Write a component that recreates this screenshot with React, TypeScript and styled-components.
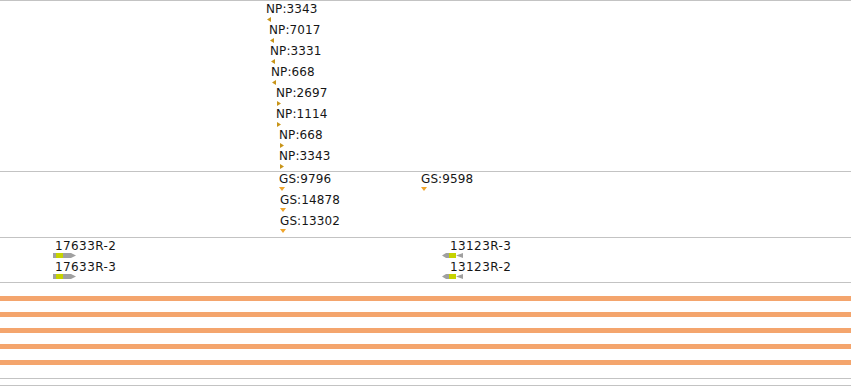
import React from 'react';
import styled, { createGlobalStyle } from 'styled-components';

const GlobalStyle = createGlobalStyle`
  html, body { margin: 0; padding: 0; background: #ffffff; }
  body {
    font-family: "DejaVu Sans", "Liberation Sans", sans-serif;
    font-size: 12px;
    color: #161616;
  }
`;

const Browser = styled.div`
  width: 851px;
  height: 386px;
  display: flex;
  flex-direction: column;
  overflow: hidden;
`;

const Track = styled.div<{ $height: number }>`
  position: relative;
  box-sizing: border-box;
  flex: none;
  height: ${p => p.$height}px;
  border-top: 1px solid #c3c3c3;
`;

const PileupTrack = styled(Track)`
  display: flex;
  flex-direction: column;
  gap: 11px;
  padding-top: 13px;
`;

const Band = styled.div`
  height: 5px;
  background: #f4a56d;
`;

const Feature = styled.div<{ $x: number; $y: number }>`
  position: absolute;
  left: ${p => p.$x}px;
  top: ${p => p.$y}px;
  display: flex;
  flex-direction: column;
  align-items: flex-start;
`;

const Label = styled.span<{ $indent: number; $spacing?: number }>`
  display: block;
  height: 14px;
  line-height: 14px;
  white-space: nowrap;
  margin-left: ${p => p.$indent}px;
  letter-spacing: ${p => p.$spacing ?? 0}px;
`;

const Marker = styled.svg<{ $shift: number; $gap: number }>`
  display: block;
  flex: none;
  margin-left: ${p => p.$shift}px;
  margin-top: ${p => p.$gap}px;
`;

type Dir = 'left' | 'right';

const Pointer: React.FC<{ dir: Dir }> = ({ dir }) => (
  <Marker $shift={1} $gap={1} width={4} height={5} viewBox="0 0 4 5">
    <polygon points={dir === 'left' ? '4,0 4,5 0,2.5' : '0,0 0,5 4,2.5'} fill="#c8951a" />
  </Marker>
);

const DownPointer: React.FC = () => (
  <Marker $shift={0} $gap={1} width={6} height={4} viewBox="0 0 6 4">
    <polygon points="0,0 6,0 3,4" fill="#f0a52c" />
  </Marker>
);

const ForwardGene: React.FC = () => (
  <Marker $shift={0} $gap={0} width={23} height={5} viewBox="0 0 23 5">
    <polygon points="0,0 18,0 23,2.5 18,5 0,5" fill="#a0a0a0" />
    <rect x={3} y={0} width={7} height={5} fill="#c6d300" />
  </Marker>
);

const ReverseGene: React.FC = () => (
  <Marker $shift={0} $gap={0} width={21} height={5} viewBox="0 0 21 5">
    <polygon points="0,2.5 4,0 7,0 7,5 4,5" fill="#a0a0a0" />
    <rect x={7} y={0} width={7} height={5} fill="#c6d300" />
    <polygon points="14,2.5 21,0 21,5" fill="#a0a0a0" />
  </Marker>
);

const npFeatures: { label: string; x: number; dir: Dir }[] = [
  { label: 'NP:3343', x: 266, dir: 'left' },
  { label: 'NP:7017', x: 269, dir: 'left' },
  { label: 'NP:3331', x: 270, dir: 'left' },
  { label: 'NP:668', x: 271, dir: 'left' },
  { label: 'NP:2697', x: 276, dir: 'right' },
  { label: 'NP:1114', x: 276, dir: 'right' },
  { label: 'NP:668', x: 279, dir: 'right' },
  { label: 'NP:3343', x: 279, dir: 'right' },
];

const gsFeatures = [
  { label: 'GS:9796', x: 279, y: 0 },
  { label: 'GS:14878', x: 280, y: 21 },
  { label: 'GS:13302', x: 280, y: 42 },
  { label: 'GS:9598', x: 421, y: 0 },
];

const genes = [
  { label: '17633R-2', x: 53, y: 1, strand: '+' },
  { label: '17633R-3', x: 53, y: 22, strand: '+' },
  { label: '13123R-3', x: 442, y: 1, strand: '-' },
  { label: '13123R-2', x: 442, y: 22, strand: '-' },
];

export default function App() {
  return (
    <>
      <GlobalStyle />
      <Browser>
        <Track $height={171}>
          {npFeatures.map((f, i) => (
            <Feature key={i} $x={f.x} $y={1 + i * 21}>
              <Label $indent={0} $spacing={0.1}>{f.label}</Label>
              <Pointer dir={f.dir} />
            </Feature>
          ))}
        </Track>
        <Track $height={66}>
          {gsFeatures.map((f, i) => (
            <Feature key={i} $x={f.x} $y={f.y}>
              <Label $indent={0} $spacing={0.1}>{f.label}</Label>
              <DownPointer />
            </Feature>
          ))}
        </Track>
        <Track $height={45}>
          {genes.map((g, i) => (
            <Feature key={i} $x={g.x} $y={g.y}>
              <Label $indent={g.strand === '+' ? 2 : 8} $spacing={0.4}>{g.label}</Label>
              {g.strand === '+' ? <ForwardGene /> : <ReverseGene />}
            </Feature>
          ))}
        </Track>
        <PileupTrack $height={96}>
          <Band />
          <Band />
          <Band />
          <Band />
          <Band />
        </PileupTrack>
        <Track $height={7} />
        <Track $height={1} />
      </Browser>
    </>
  );
}
